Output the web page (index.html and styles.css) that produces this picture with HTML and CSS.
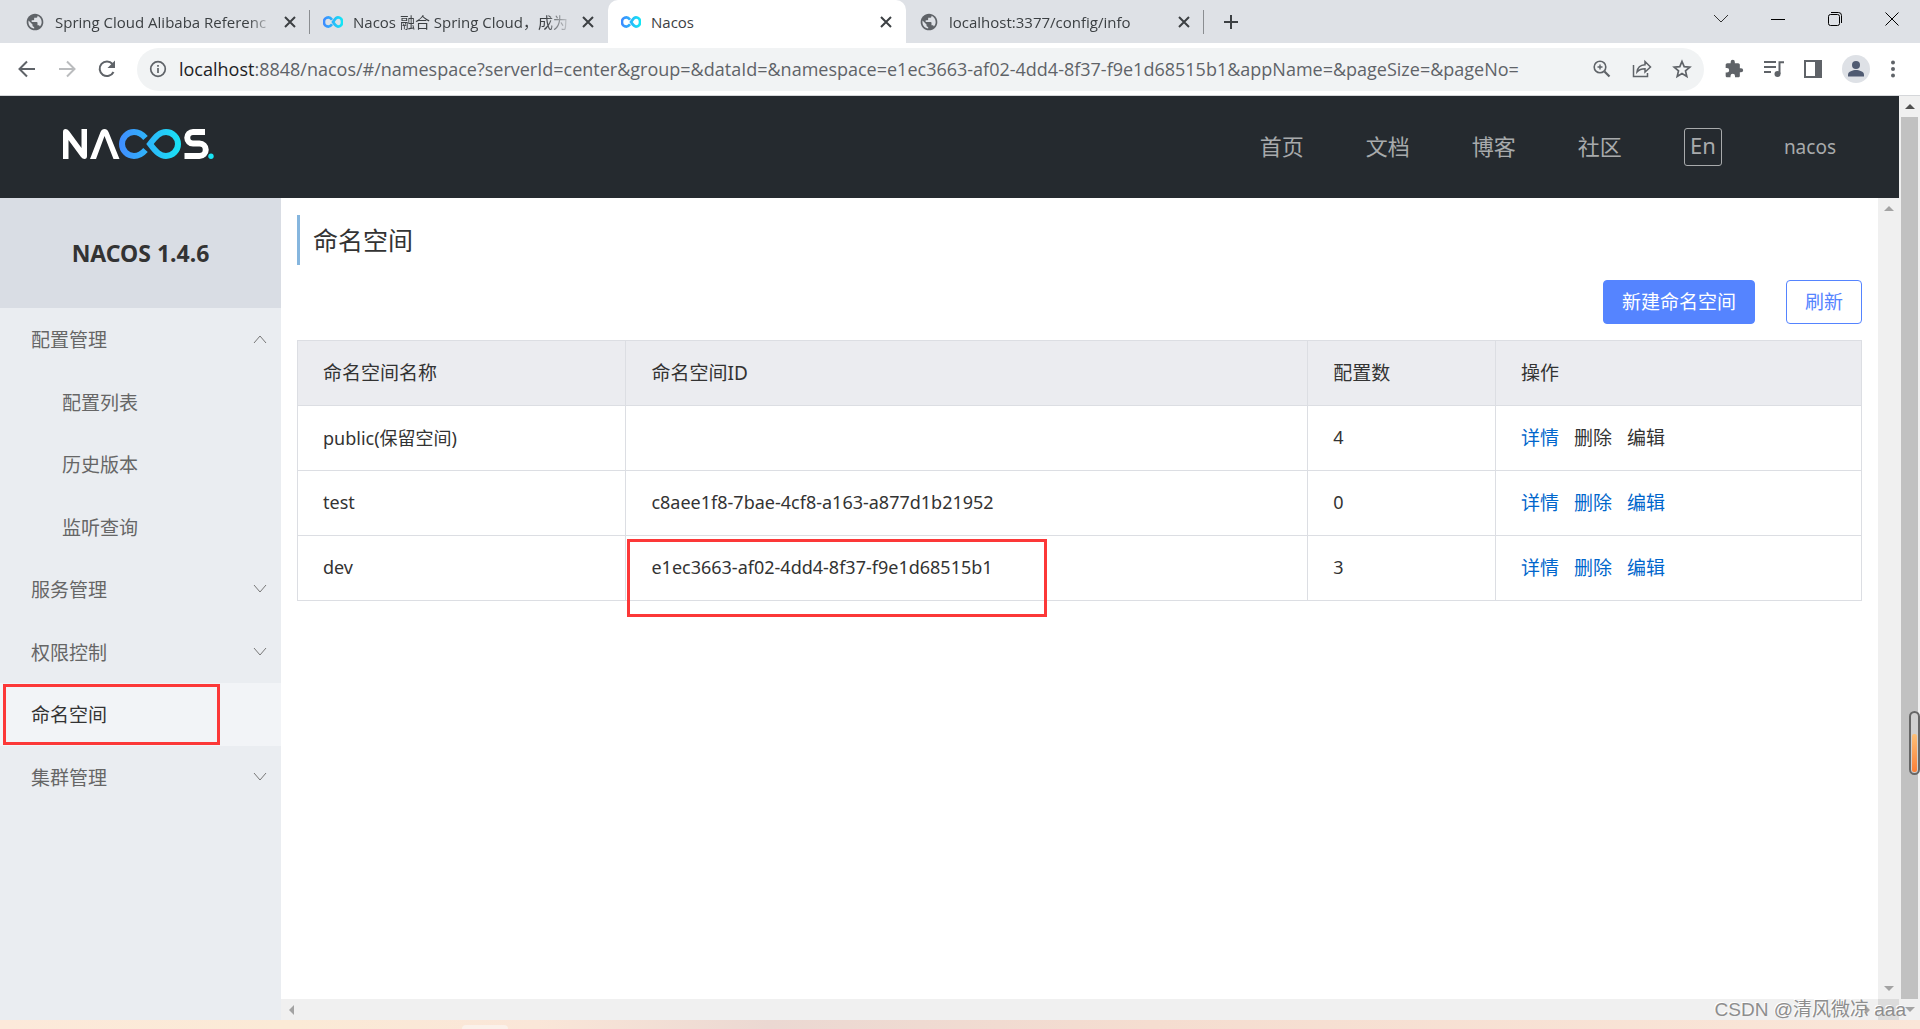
FILE: index.html
```html
<!DOCTYPE html>
<html lang="zh-CN">
<head>
<meta charset="utf-8">
<title>Nacos</title>
<link rel="stylesheet" href="styles.css">
</head>
<body>
<svg class="defs" aria-hidden="true">
  <defs>
    <linearGradient id="wave" x1="0" x2="1" y1="0" y2="0"><stop offset="0" stop-color="#3d8bff"/><stop offset="1" stop-color="#13e5f5"/></linearGradient>
    <linearGradient id="wave-logo" gradientUnits="userSpaceOnUse" x1="56" y1="0" x2="118" y2="0"><stop offset="0" stop-color="#418cff"/><stop offset="1" stop-color="#18e4f5"/></linearGradient>
    <symbol id="globe" viewBox="0 0 24 24"><path fill="#5f6368" d="M12 2C6.480 2 2 6.480 2 12s4.480 10 10 10 10-4.480 10-10S17.520 2 12 2z"/><path fill="#dee1e6" d="M11 19.900C7 19.400 4.100 16 4.100 12c0-.6.1-1.200.2-1.800L9 15v1c0 1.100.9 2 2 2zM17.900 17.400c-.3-.8-1-1.400-1.900-1.400h-1v-3c0-.6-.4-1-1-1H8v-2h2c.6 0 1-.4 1-1V7h2c1.100 0 2-.9 2-2v-.4c2.900 1.200 5 4.100 5 7.400 0 2.100-.8 4-2.100 5.400z"/></symbol>
    <symbol id="loop" viewBox="0 0 22 14"><path d="M10 4.500C8.500 2.500 7.500 2 6 2a5 5 0 0 0 0 10c1.500 0 2.500-.5 4-2.500M11 7c2-3 3-5 5.500-5a4.500 5 0 0 1 0 10C14 12 13 10 11 7z" fill="none" stroke="url(#wave)" stroke-width="3"/></symbol>
    <symbol id="cross" viewBox="0 0 12 12"><path d="M1 1l10 10M11 1L1 11" fill="none" stroke="#3c4043" stroke-width="2"/></symbol>
    <symbol id="down" viewBox="0 0 14 10"><path d="M1 1l6 7 6-7" fill="none" stroke="#777" stroke-width="1"/></symbol>
  </defs>
</svg>

<header class="tabs">
  <div class="tab"><svg class="favicon"><use href="#globe"/></svg><span class="tab-title">Spring Cloud Alibaba Referenc</span><button class="close" aria-label="Close"><svg><use href="#cross"/></svg></button></div>
  <div class="tab"><svg class="favicon"><use href="#loop"/></svg><span class="tab-title">Nacos 融合 Spring Cloud，成为</span><button class="close" aria-label="Close"><svg><use href="#cross"/></svg></button></div>
  <div class="tab active"><svg class="favicon"><use href="#loop"/></svg><span class="tab-title">Nacos</span><button class="close" aria-label="Close"><svg><use href="#cross"/></svg></button></div>
  <div class="tab"><svg class="favicon"><use href="#globe"/></svg><span class="tab-title">localhost:3377/config/info</span><button class="close" aria-label="Close"><svg><use href="#cross"/></svg></button></div>
  <button class="new-tab" aria-label="New tab"><svg width="16" height="16" viewBox="0 0 16 16"><path d="M8 1v14M1 8h14" stroke="#3c4043" stroke-width="2"/></svg></button>
  <div class="window">
    <button aria-label="Search tabs"><svg width="16" height="16" viewBox="0 0 16 16"><path d="M1 4l7 7 7-7" fill="none" stroke="#333"/></svg></button>
    <button aria-label="Minimize"><svg width="14" height="16" viewBox="0 0 14 16"><path d="M0 8.500h14" stroke="#000"/></svg></button>
    <button aria-label="Restore"><svg width="14" height="14" viewBox="0 0 14 14"><rect x=".5" y="2.500" width="11" height="11" rx="2" fill="none" stroke="#000"/><path d="M3 .5h7.500a3 3 0 0 1 3 3V11" fill="none" stroke="#000"/></svg></button>
    <button aria-label="Close window"><svg width="14" height="14" viewBox="0 0 14 14"><path d="M.5.5l13 13M13.500.5l-13 13" stroke="#000"/></svg></button>
  </div>
</header>

<div class="toolbar">
  <button class="tool" aria-label="Back"><svg width="20" height="20" viewBox="0 0 20 20"><path d="M18 10H3M10 2.500L2.500 10l7.500 7.500" fill="none" stroke="#5f6368" stroke-width="2"/></svg></button>
  <button class="tool" aria-label="Forward"><svg width="20" height="20" viewBox="0 0 20 20"><path d="M2 10h15M10 2.500l7.500 7.500-7.500 7.500" fill="none" stroke="#babcbe" stroke-width="2"/></svg></button>
  <button class="tool" aria-label="Reload"><svg width="20" height="20" viewBox="0 0 20 20"><path d="M16.500 13A7.300 7.300 0 1 1 15.500 5" fill="none" stroke="#5f6368" stroke-width="2"/><path d="M18 1.500V9h-7.500z" fill="#5f6368"/></svg></button>
  <div class="address">
    <svg width="18" height="18" viewBox="0 0 18 18"><circle cx="9" cy="9" r="7.300" fill="none" stroke="#5f6368" stroke-width="1.700"/><path d="M9 8v5M9 5v1.700" stroke="#5f6368" stroke-width="1.700"/></svg>
    <p class="url"><b>localhost</b>:8848/nacos/#/namespace?serverId=center&amp;group=&amp;dataId=&amp;namespace=e1ec3663-af02-4dd4-8f37-f9e1d68515b1&amp;appName=&amp;pageSize=&amp;pageNo=</p>
    <div class="address-tools">
      <button class="tool" aria-label="Zoom"><svg width="20" height="20" viewBox="0 0 20 20"><circle cx="8" cy="8" r="5.800" fill="none" stroke="#5f6368" stroke-width="1.600"/><path d="M12.500 12.500l5 5" stroke="#5f6368" stroke-width="2.200"/><path d="M8 5.500v5M5.500 8h5" stroke="#5f6368" stroke-width="1.400"/></svg></button>
      <button class="tool" aria-label="Share"><svg width="20" height="20" viewBox="0 0 20 20"><path d="M1.500 6v11.500h14V14" fill="none" stroke="#5f6368" stroke-width="1.500"/><path d="M5 13c.5-4.500 3-7 8-7.300V2.500L18.500 8 13 13V9.800C9 9.800 7 10.800 5 13z" fill="none" stroke="#5f6368" stroke-width="1.500"/></svg></button>
      <button class="tool" aria-label="Bookmark"><svg width="20" height="20" viewBox="0 0 20 20"><path d="M10 2.500l2.200 5.200 5.600.5-4.300 3.700 1.300 5.500-4.800-2.900-4.800 2.900 1.300-5.500L2.200 8.200l5.600-.5z" fill="none" stroke="#5f6368" stroke-width="1.700"/></svg></button>
    </div>
  </div>
  <button class="tool" aria-label="Extensions"><svg width="20" height="20" viewBox="0 0 24 24"><path fill="#5f6368" d="M20.500 11H19V7c0-1.100-.9-2-2-2h-4V3.500a2.500 2.500 0 0 0-5 0V5H4c-1.100 0-2 .9-2 2v3.800h1.500a2.700 2.700 0 0 1 0 5.400H2V20c0 1.100.9 2 2 2h3.800v-1.500a2.700 2.700 0 0 1 5.400 0V22H17c1.100 0 2-.9 2-2v-4h1.500a2.500 2.500 0 0 0 0-5z"/></svg></button>
  <button class="tool" aria-label="Media"><svg width="20" height="20" viewBox="0 0 20 20"><path d="M0 3h12M0 8h12M0 13h7M15.500 15V3.200H20" fill="none" stroke="#5f6368" stroke-width="2"/><circle cx="13.500" cy="15" r="3" fill="#5f6368"/></svg></button>
  <button class="tool" aria-label="Side panel"><svg width="18" height="18" viewBox="0 0 18 18"><rect x="1" y="1" width="16" height="16" fill="none" stroke="#5f6368" stroke-width="2"/><path d="M11 1h6v16h-6z" fill="#5f6368"/></svg></button>
  <button class="tool" aria-label="Profile"><svg width="28" height="28" viewBox="0 0 28 28"><circle cx="14" cy="14" r="14" fill="#dee1e6"/><circle cx="14" cy="10" r="4" fill="#505b72"/><path d="M6 21.500v-2c0-3 5-4.500 8-4.500s8 1.500 8 4.500v2z" fill="#505b72"/></svg></button>
  <button class="tool" aria-label="Menu"><svg width="6" height="20" viewBox="0 0 6 20"><g fill="#5f6368"><circle cx="3" cy="3.500" r="2"/><circle cx="3" cy="10" r="2"/><circle cx="3" cy="16.500" r="2"/></g></svg></button>
</div>

<div class="viewport">
  <div class="page">
    <header class="masthead">
      <a href="#" class="logo" aria-label="NACOS"><svg width="151" height="30" viewBox="0 0 151 30">
        <path d="M0 30V3Q0 0 2.500 0Q4.500 0 6 2L18.500 19V0H24V27Q24 30 21.500 30Q19.500 30 18 28L5.500 11V30z" fill="#fff"/>
        <path d="M27 30L37.500 3Q38.700 0 41.500 0T45.500 3L56.500 30H50.500L41.500 7L33 30z" fill="#fff"/>
        <path d="M82.500 9C79 5 76 3 71 3a12 12 0 0 0 0 24c5 0 8-2 11.500-6" fill="none" stroke="url(#wave-logo)" stroke-width="6"/>
        <path d="M87 15C93 7 97 3 103 3a12 12 0 0 1 0 24C97 27 93 23 87 15z" fill="none" stroke="url(#wave-logo)" stroke-width="6"/>
        <path d="M142 3h-12a5.700 5.700 0 0 0 0 11.500h6.500a6.200 6.200 0 0 1 0 12.500h-15" fill="none" stroke="#fff" stroke-width="6"/>
        <circle cx="148" cy="27.300" r="2.700" fill="#18e4f5"/></svg></a>
      <nav class="links">
        <a href="#">首页</a><a href="#">文档</a><a href="#">博客</a><a href="#">社区</a>
        <button class="lang">En</button>
        <a href="#" class="user">nacos</a>
      </nav>
    </header>
    <div class="body">
      <aside class="side">
        <h1 class="version">NACOS 1.4.6</h1>
        <nav class="menu">
          <a href="#">配置管理<svg class="up"><use href="#down"/></svg></a>
          <a href="#" class="sub">配置列表</a>
          <a href="#" class="sub">历史版本</a>
          <a href="#" class="sub">监听查询</a>
          <a href="#">服务管理<svg><use href="#down"/></svg></a>
          <a href="#">权限控制<svg><use href="#down"/></svg></a>
          <a href="#" class="current">命名空间<span class="mark"></span></a>
          <a href="#">集群管理<svg><use href="#down"/></svg></a>
        </nav>
      </aside>
      <div class="pane">
        <main class="content">
          <h2 class="title">命名空间</h2>
          <div class="actions"><button class="btn primary">新建命名空间</button><button class="btn">刷新</button></div>
          <table class="spaces">
            <thead><tr><th class="c-name">命名空间名称</th><th class="c-id">命名空间ID</th><th class="c-count">配置数</th><th>操作</th></tr></thead>
            <tbody>
              <tr><td>public(保留空间)</td><td></td><td>4</td><td><div class="ops"><a href="#">详情</a><span>删除</span><span>编辑</span></div></td></tr>
              <tr><td>test</td><td>c8aee1f8-7bae-4cf8-a163-a877d1b21952</td><td>0</td><td><div class="ops"><a href="#">详情</a><a href="#">删除</a><a href="#">编辑</a></div></td></tr>
              <tr><td>dev</td><td class="marked">e1ec3663-af02-4dd4-8f37-f9e1d68515b1<span class="mark"></span></td><td>3</td><td><div class="ops"><a href="#">详情</a><a href="#">删除</a><a href="#">编辑</a></div></td></tr>
            </tbody>
          </table>
        </main>
        <div class="vbar"><i class="arrow n"></i><i class="arrow s"></i></div>
        <div class="hbar"><i class="arrow w"></i><i class="arrow e"></i></div>
        <div class="corner"></div>
      </div>
    </div>
  </div>
  <div class="scroll"><i class="arrow n dark"></i><div class="thumb"></div><i class="arrow s"></i></div>
  <div class="gauge"><div class="fill"></div></div>
  <p class="credit">CSDN @清风微凉 aaa</p>
</div>
<footer class="desk"><div class="dock"></div></footer>
</body>
</html>
```
FILE: styles.css
```css
* { box-sizing: border-box; }
body {
  margin: 0;
  min-height: 100vh;
  display: flex;
  flex-direction: column;
  overflow: hidden;
  background: #fff;
  color: #333;
  font-family: "Noto Sans", "Noto Sans CJK SC", sans-serif;
  font-size: 18px;
}
a { color: inherit; text-decoration: none; }
button { border: 0; padding: 0; background: none; font: inherit; color: inherit; }
h1, h2, p { margin: 0; font-weight: 400; }
svg { display: block; flex: none; }
.defs { position: absolute; width: 0; height: 0; }

/* tab strip */
.tabs { display: flex; height: 43px; background: #dee1e6; padding-left: 12px; font-family: "Open Sans", "Noto Sans CJK SC", sans-serif; font-size: 15px; color: #3c4043; }
.tab { flex: 0 1 298px; min-width: 0; display: flex; align-items: center; gap: 10px; padding: 0 14px 0 13px; position: relative; }
.tab:not(.active)::after { content: ""; position: absolute; right: 0; top: 10px; width: 1px; height: 24px; background: #8a8d91; }
.tab:nth-child(2)::after { display: none; }
.tab.active { background: #fff; border-radius: 10px 10px 0 0; }
.favicon { width: 20px; height: 20px; }
.tab-title { flex: 1; min-width: 0; overflow: hidden; white-space: nowrap; -webkit-mask-image: linear-gradient(90deg, #000 88%, transparent); mask-image: linear-gradient(90deg, #000 88%, transparent); }
.active .tab-title { -webkit-mask-image: none; mask-image: none; }
.close svg { width: 12px; height: 12px; }
.new-tab { width: 54px; display: grid; place-items: center; }
.window { margin-left: auto; display: flex; }
.window button { width: 57px; height: 37px; display: grid; place-items: center; }

/* toolbar */
.toolbar { display: flex; align-items: center; gap: 20px; height: 53px; padding: 0 24px 0 17px; border-bottom: 1px solid #d5d7da; }
.tool { flex: none; display: grid; place-items: center; }
.address { flex: 1; min-width: 0; height: 43px; display: flex; align-items: center; gap: 12px; padding: 0 12px; border-radius: 22px; background: #f1f3f4; }
.address-tools { display: flex; gap: 20px; }
.url { flex: 1; min-width: 0; overflow: hidden; white-space: nowrap; color: #5f6368; font-family: "Open Sans", sans-serif; font-size: 18px; }
.url b { font-weight: 400; color: #202124; }

/* page */
.viewport { flex: 1; display: flex; position: relative; }
.page { flex: 1; min-width: 0; display: flex; flex-direction: column; }
.masthead { display: flex; align-items: center; justify-content: space-between; height: 102px; padding: 0 63px; background: #252a2f; color: #a8aaac; }
.logo { padding-bottom: 6px; }
.links { display: flex; align-items: center; gap: 62px; font-size: 22px; }
.links a { padding-bottom: 4px; }
.lang { width: 38px; height: 38px; border: 1px solid #a8aaac; border-radius: 3px; padding-bottom: 4px; line-height: 30px; }
.links .user { padding: 0; font-size: 19px; }
.body { flex: 1; display: flex; }
.side { width: 281px; background: #eaedf1; }
.version { height: 110px; display: grid; place-items: center; background: #d9dde4; font-size: 23px; font-weight: 700; }
.menu { display: grid; grid-auto-rows: 1fr; height: 500px; font-size: 19px; color: #666; }
.menu a { display: flex; align-items: center; justify-content: space-between; padding: 0 14px 0 31px; position: relative; }
.menu a.sub { padding-left: 62px; }
.menu .current { background: #f2f4f7; color: #333; }
.menu svg { width: 14px; height: 10px; }
.menu .up { transform: rotate(180deg); }
.mark { position: absolute; border: 3px solid #fc3838; }
.menu .mark { left: 3px; top: 1px; width: 217px; height: 61px; }

.pane { flex: 1; min-width: 0; display: grid; grid-template-columns: 1fr 21px; grid-template-rows: 1fr 21px; }
.content { padding: 17px 16px 0; }
.title { height: 50px; padding-left: 13px; border-left: 3px solid #86b6de; font-size: 25px; line-height: 50px; }
.actions { display: flex; justify-content: flex-end; gap: 31px; margin: 15px 0 16px; }
.btn { height: 44px; padding: 0 18px 2px; border: 1px solid #5584ff; border-radius: 4px; background: #fff; color: #5584ff; font-size: 19px; }
.primary { background: #5584ff; color: #fff; }
.spaces { width: 100%; border-collapse: collapse; table-layout: fixed; }
.spaces th, .spaces td { height: 65px; padding: 0 25px 2px; border: 1px solid #dcdee3; text-align: left; font-weight: 400; }
.spaces th { background: #ebecf0; font-size: 19px; }
.c-name { width: 21%; }
.c-id { width: 43.6%; }
.c-count { width: 12%; }
.ops { display: flex; gap: 15px; font-size: 19px; }
.ops a { color: #06c; }
.marked { position: relative; }
.marked .mark { left: 1px; top: 3px; width: 420px; height: 78px; }

/* scroll bars */
.vbar, .scroll { display: flex; flex-direction: column; align-items: center; justify-content: space-between; background: #f0f0f0; padding: 8px 0; }
.hbar { display: flex; align-items: center; justify-content: space-between; background: #f0f0f0; padding: 0 8px; }
.corner { background: #dcdcdc; }
.scroll { width: 21px; gap: 8px; }
.thumb { flex: 1; width: 17px; background: #c1c1c1; }
.arrow { width: 0; height: 0; border: 5px solid transparent; }
.n { border-top: 0; border-bottom-color: #a3a3a3; }
.s { border-bottom: 0; border-top-color: #a3a3a3; }
.w { border-left: 0; border-right-color: #a3a3a3; }
.e { border-right: 0; border-left-color: #a3a3a3; }
.dark { border-bottom-color: #505050; }

/* desktop overlays */
.gauge { position: absolute; right: 0; top: 615px; width: 11px; height: 64px; padding: 1px; border: 2px solid #666; border-radius: 6px; background: #d0d0d0; display: flex; align-items: flex-end; }
.fill { width: 100%; height: 38px; border-radius: 2px; background: linear-gradient(#fcc079, #fa7f38); }
.credit { position: absolute; right: 14px; bottom: 0; font-family: "Liberation Sans", "Noto Sans CJK SC", sans-serif; font-size: 19px; line-height: 20px; color: #8d8d8d; text-shadow: -1px -1px 0 #fff; }
.desk { height: 9px; background: linear-gradient(90deg, #fce9da, #fbead6 15%, #fae6d8 28%, #ebd8d2 40%, #f5ddd0 60%, #fae6d8); display: flex; }
.dock { width: 46px; height: 4px; margin: 5px 0 0 462px; border-radius: 4px 4px 0 0; background: #fbf1ea; }
```
